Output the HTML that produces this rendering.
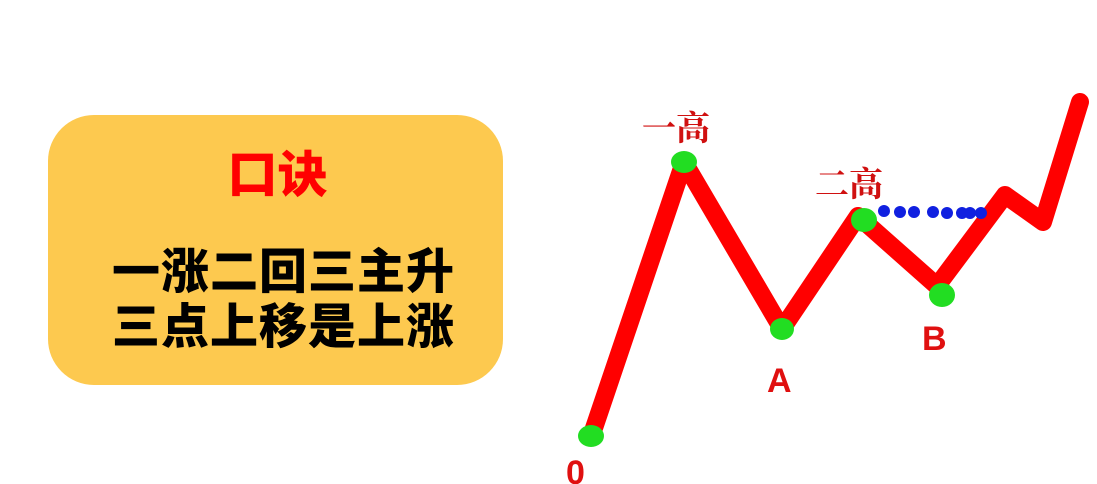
<!DOCTYPE html>
<html><head><meta charset="utf-8"><style>
body{margin:0;width:1097px;height:484px;background:#fff;overflow:hidden;position:relative;font-family:"Liberation Sans","Noto Sans CJK SC",sans-serif}
.box{position:absolute;left:48px;top:115px;width:455px;height:270px;background:#fdc94f;border-radius:46px}
.t{position:absolute;left:0;width:100%;text-align:center;font-weight:900;white-space:nowrap}
</style></head><body>
<div class="box">
<div class="t" style="top:30px;left:2px;font-size:50px;color:#f00;line-height:60px">口诀</div>
<div class="t" style="top:130px;left:8px;font-size:48px;color:#000;line-height:55px;letter-spacing:1px">一涨二回三主升<br>三点上移是上涨</div>
</div>
<svg width="1097" height="484" style="position:absolute;left:0;top:0">
<polyline points="591,437 684,162 782,329 858,216 937,286 1005,195 1043,222 1080,102" fill="none" stroke="#f00" stroke-width="18" stroke-linejoin="round" stroke-linecap="round"/>
<g fill="#1020e0">
<circle cx="884" cy="211" r="6"/><circle cx="900" cy="212" r="6"/><circle cx="914" cy="212" r="6"/><circle cx="933" cy="212" r="6"/><circle cx="947" cy="213" r="6"/><circle cx="962" cy="213" r="6"/><circle cx="970" cy="213" r="6"/><circle cx="981" cy="213" r="6"/>
</g>
<g fill="#22dd22">
<ellipse cx="591" cy="436" rx="13" ry="11"/><ellipse cx="684" cy="162" rx="13" ry="11"/><ellipse cx="782" cy="329" rx="12" ry="11"/><ellipse cx="864" cy="220" rx="13" ry="12"/><ellipse cx="942" cy="295" rx="13" ry="12"/>
</g>
<g fill="#d01010" font-family="'Noto Serif CJK SC',serif" font-weight="bold" font-size="34">
<text x="642" y="140">一高</text><text x="815" y="196">二高</text>
</g>
<g fill="#e01010" font-family="'Liberation Sans',sans-serif" font-weight="bold" font-size="34">
<text x="767" y="392">A</text><text x="922" y="350">B</text><text x="566" y="484">0</text>
</g>
</svg>
</body></html>
